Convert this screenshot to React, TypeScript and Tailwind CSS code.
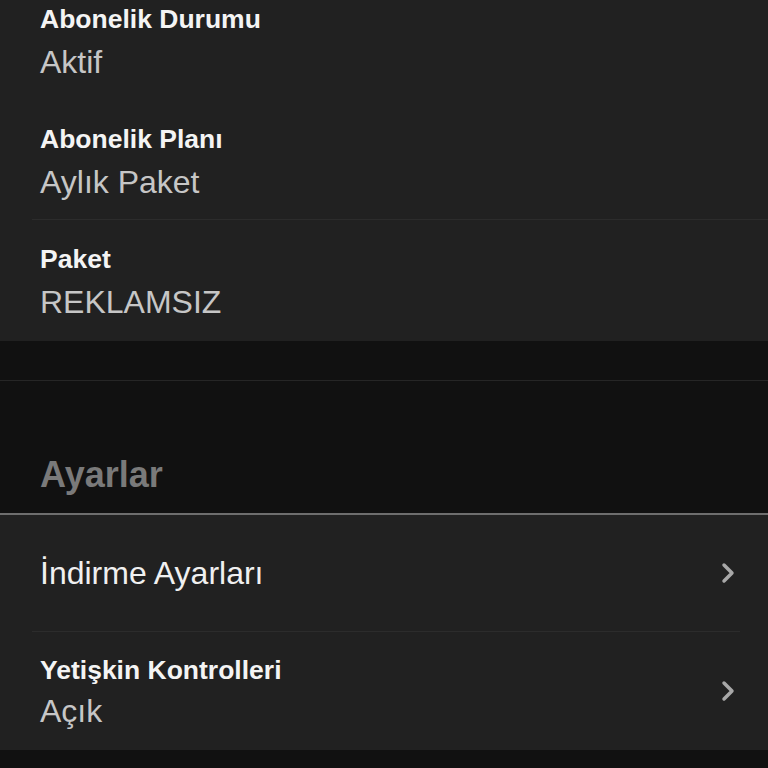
import { ChevronRight } from "lucide-react";

const font = { fontFamily: '"Liberation Sans", Arial, sans-serif' };

function InfoRow({ title, value, first }: { title: string; value: string; first?: boolean }) {
  return (
    <div className={first ? "h-[100px] pt-[3px] pl-10" : "h-[119px] pt-[23px] pl-10"}>
      <div className="text-[26.5px] leading-[32px] font-bold text-[#f4f4f4]">{title}</div>
      <div className="mt-[7px] text-[32px] leading-[40px] text-[#c6c6c6]">{value}</div>
    </div>
  );
}

export default function App() {
  return (
    <div className="w-[768px] h-[768px] overflow-hidden bg-[#111111]" style={font}>
      <section className="bg-[#212121] pb-[2px]">
        <InfoRow first title="Abonelik Durumu" value="Aktif" />
        <InfoRow title="Abonelik Planı" value="Aylık Paket" />
        <div className="ml-8 h-px bg-[#2c2c2c]"></div>
        <InfoRow title="Paket" value="REKLAMSIZ" />
      </section>

      <div className="h-[39px]"></div>
      <div className="h-px bg-[#262626]"></div>
      <div className="h-[132px] flex items-end pl-10 pb-[18px]">
        <h2 className="text-[36px] leading-[40px] font-bold text-[#7a7a7a]">Ayarlar</h2>
      </div>
      <div className="h-[2px] bg-[#6e6e6e]"></div>

      <section className="bg-[#212121]">
        <div className="h-[116px] flex items-center justify-between pl-10 pr-[24px]">
          <span className="text-[32px] leading-[40px] text-[#f0f0f0]">İndirme Ayarları</span>
          <ChevronRight className="w-8 h-8 text-[#a8a8a8]" strokeWidth={2.6} />
        </div>
        <div className="ml-8 mr-7 h-px bg-[#2c2c2c]"></div>
        <div className="h-[118px] flex items-center justify-between pl-10 pr-[24px]">
          <div className="pt-[2px]">
            <div className="text-[26.5px] leading-[32px] font-bold text-[#f4f4f4]">Yetişkin Kontrolleri</div>
            <div className="mt-[5px] text-[32px] leading-[40px] text-[#c6c6c6]">Açık</div>
          </div>
          <ChevronRight className="w-8 h-8 text-[#a8a8a8]" strokeWidth={2.6} />
        </div>
      </section>
    </div>
  );
}
